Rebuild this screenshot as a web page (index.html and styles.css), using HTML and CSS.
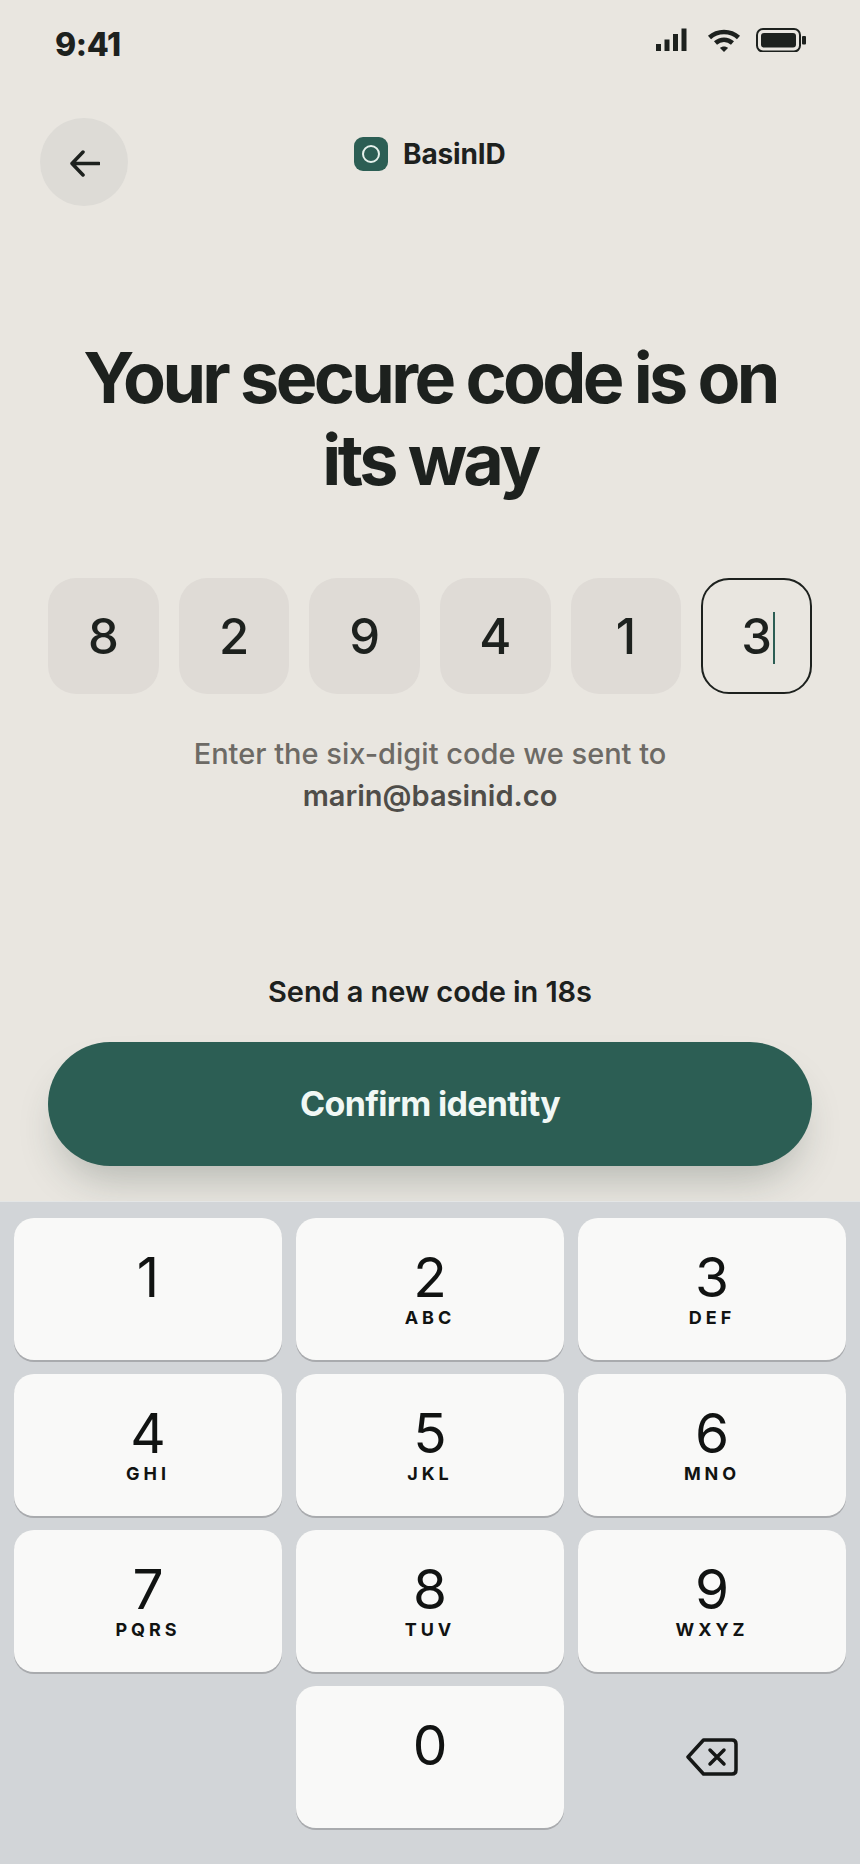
FILE: index.html
```html
<!DOCTYPE html>
<html>
<head>
    <title>BasinID - Verify</title>
    <link rel="stylesheet" href="styles.css">
</head>
<body>
    <div class="screen">
        <div class="status-bar">
            <span class="time">9:41</span>
            <div class="status-icons">
                <svg width="32" height="24" viewBox="0 0 32 24"><rect x="0" y="16" width="5" height="7" fill="#1d211e"/><rect x="8.5" y="11.5" width="5" height="11.5" fill="#1d211e"/><rect x="17" y="6" width="5" height="17" fill="#1d211e"/><rect x="25.500" y="0.500" width="5" height="22.500" fill="#1d211e"/></svg>
                <svg class="wifi" width="34" height="24" viewBox="0 0 34 24"><path d="M2.500 9.500C10.500 2 23.500 2 31.500 9.500" fill="none" stroke="#1d211e" stroke-width="4.500"/><path d="M8.500 15C13.500 10.500 20.500 10.500 25.500 15" fill="none" stroke="#1d211e" stroke-width="4.500"/><path d="M13 20L17 24L21 20C19 18 15 18 13 20Z" fill="#1d211e"/></svg>
                <svg class="battery" width="50" height="24" viewBox="0 0 50 24"><rect x="1" y="1" width="43" height="22.500" rx="6" fill="none" stroke="#1d211e" stroke-width="2"/><rect x="5" y="5" width="35" height="14.500" rx="3" fill="#1d211e"/><rect x="46" y="8" width="4" height="8.500" rx="1" fill="#1d211e"/></svg>
            </div>
        </div>

        <div class="nav">
            <div class="back-button">
                <svg width="30" height="27" viewBox="0 0 30 27"><path d="M29 13.500H2.500M13 2L2 13.500L13 25" fill="none" stroke="#1d211e" stroke-width="3.500" stroke-linecap="round" stroke-linejoin="round"/></svg>
            </div>
            <div class="brand">
                <span class="brand-mark"><span class="brand-ring"></span></span>
                <span class="brand-name">BasinID</span>
            </div>
        </div>

        <h1>Your secure code is on its way</h1>

        <div class="code-row">
            <div class="code-cell">8</div>
            <div class="code-cell">2</div>
            <div class="code-cell">9</div>
            <div class="code-cell">4</div>
            <div class="code-cell">1</div>
            <div class="code-cell active">3<span class="caret"></span></div>
        </div>

        <p class="hint">Enter the six-digit code we sent to<br><strong>marin@basinid.co</strong></p>

        <p class="resend">Send a new code in 18s</p>
        <button type="button" class="confirm">Confirm identity</button>

        <div class="keyboard">
            <div class="key"><span class="num">1</span></div>
            <div class="key"><span class="num">2</span><span class="letters">ABC</span></div>
            <div class="key"><span class="num">3</span><span class="letters">DEF</span></div>
            <div class="key"><span class="num">4</span><span class="letters">GHI</span></div>
            <div class="key"><span class="num">5</span><span class="letters">JKL</span></div>
            <div class="key"><span class="num">6</span><span class="letters">MNO</span></div>
            <div class="key"><span class="num">7</span><span class="letters">PQRS</span></div>
            <div class="key"><span class="num">8</span><span class="letters">TUV</span></div>
            <div class="key"><span class="num">9</span><span class="letters">WXYZ</span></div>
            <div class="key-blank"></div>
            <div class="key"><span class="num">0</span></div>
            <div class="key-blank delete">
                <svg width="52" height="38" viewBox="0 0 52 38"><path d="M17.500 2H46C48.500 2 50 3.500 50 6V32C50 34.500 48.500 36 46 36H17.500L2 19Z" fill="none" stroke="#151716" stroke-width="3.500" stroke-linejoin="round"/><path d="M24 12L38 26M38 12L24 26" fill="none" stroke="#151716" stroke-width="3.500" stroke-linecap="round"/></svg>
            </div>
        </div>
    </div>
</body>
</html>
```

FILE: styles.css
```css
* {
    box-sizing: border-box;
}

body {
    margin: 0;
    font-family: Inter, "Liberation Sans", sans-serif;
    background-color: #e9e6e0;
    color: #1d211e;
}

.screen {
    width: 860px;
    height: 1864px;
    display: flex;
    flex-direction: column;
    overflow: hidden;
}

.status-bar {
    height: 118px;
    padding: 24px 54px 0 55px;
    display: flex;
    justify-content: space-between;
    align-items: flex-start;
}

.time {
    font-size: 32px;
    font-weight: 800;
    line-height: 42px;
    letter-spacing: -0.01em;
}

.status-icons {
    display: flex;
    gap: 19px;
    margin-top: 4px;
}

.status-icons svg {
    display: block;
}

.status-icons .wifi {
    margin-right: -4px;
}

.nav {
    height: 88px;
    padding-left: 40px;
    display: flex;
    position: relative;
}

.back-button {
    width: 88px;
    height: 88px;
    padding: 2px 0 0 2px;
    border-radius: 50%;
    background-color: #dddbd6;
    display: flex;
    align-items: center;
    justify-content: center;
}

.brand {
    position: absolute;
    left: 354px;
    top: 18px;
    display: flex;
    align-items: center;
    gap: 15px;
    font-size: 28px;
    font-weight: 700;
    line-height: 34px;
    letter-spacing: -0.005em;
}

.brand-name {
    padding-top: 1px;
}

.brand-mark {
    width: 34px;
    height: 34px;
    border-radius: 9px;
    background-color: #2c5e54;
    display: flex;
    align-items: center;
    justify-content: center;
}

.brand-ring {
    width: 18px;
    height: 18px;
    border-radius: 50%;
    border: 2px solid #e6f1ec;
}

h1 {
    margin: 131px 60px 0;
    font-size: 70px;
    font-weight: 700;
    line-height: 82px;
    letter-spacing: -0.052em;
    text-align: center;
}

.code-row {
    margin: 77px 48px 0;
    display: grid;
    grid-template-columns: repeat(6, 1fr);
    gap: 20px;
}

.code-cell {
    height: 116px;
    border-radius: 28px;
    background-color: #dfdbd6;
    display: flex;
    align-items: center;
    justify-content: center;
    font-size: 49px;
    font-weight: 500;
    position: relative;
}

.code-cell.active {
    background-color: #e9e6e0;
    border: 2px solid #1d211e;
}

.caret {
    position: absolute;
    left: 70px;
    top: 32px;
    width: 2px;
    height: 52px;
    background-color: #2c5e54;
}

.hint {
    margin: 39px 0 0;
    font-size: 29px;
    font-weight: 500;
    line-height: 42px;
    color: #6d6a65;
    text-align: center;
}

.hint strong {
    font-weight: 600;
    color: #4f4d49;
}

.resend {
    margin: 157px 0 0;
    font-size: 29px;
    font-weight: 600;
    line-height: 36px;
    letter-spacing: -0.003em;
    text-align: center;
}

.confirm {
    margin: 32px 48px 0;
    height: 124px;
    padding-bottom: 2px;
    border: none;
    border-radius: 62px;
    background-color: #2c5e54;
    color: #f1f8f5;
    font-family: inherit;
    font-size: 34px;
    font-weight: 700;
    letter-spacing: -0.02em;
    box-shadow: 0 24px 40px -12px rgba(44, 60, 54, 0.28);
    flex-shrink: 0;
}

.keyboard {
    margin-top: 35px;
    flex: 1;
    padding: 16px 14px 0;
    background-color: #d2d5d8;
    border-top: 1px solid #e4e6e6;
    display: grid;
    grid-template-columns: repeat(3, 1fr);
    grid-auto-rows: 142px;
    gap: 14px;
    position: relative;
}

.key {
    border-radius: 20px;
    background-color: #f9f9f8;
    box-shadow: 0 2px 0 #a9abae;
    display: flex;
    flex-direction: column;
    align-items: center;
    padding-top: 28px;
    color: #111312;
}

.num {
    font-size: 55px;
    font-weight: 400;
    line-height: 62px;
}

.letters {
    font-size: 18px;
    font-weight: 700;
    line-height: 20px;
    letter-spacing: 0.22em;
}

.delete {
    display: flex;
    align-items: center;
    justify-content: center;
}
```
